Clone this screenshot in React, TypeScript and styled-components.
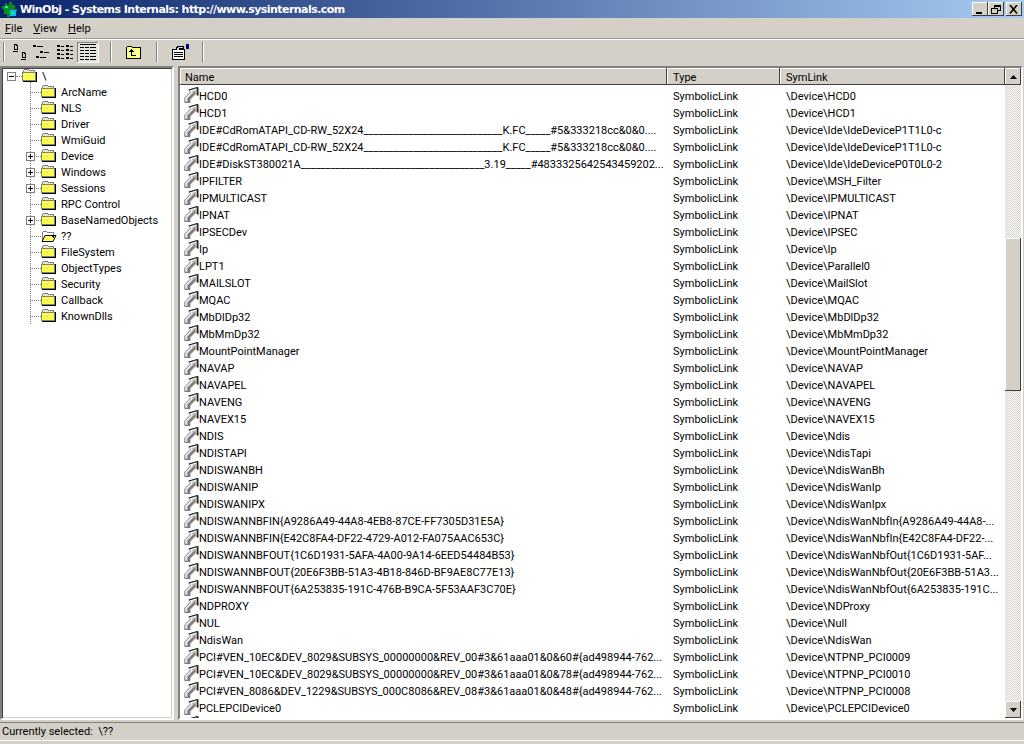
import React from "react";
import styled, { createGlobalStyle } from "styled-components";

const Global = createGlobalStyle`
  html, body { margin: 0; padding: 0; width: 1024px; height: 744px; overflow: hidden; background: #d4d0c8; }
  * { box-sizing: border-box; }
`;
const Win = styled.div`
  width: 1024px; height: 744px; display: flex; flex-direction: column; background: #d4d0c8;
  font-family: Roboto, "Liberation Sans", Arial, sans-serif; font-size: 11px; color: #000; overflow: hidden;
`;
const TitleBar = styled.div`
  height: 18px; flex: none; display: flex; align-items: center; padding: 0 2px 0 2px; gap: 2px;
  background: linear-gradient(90deg, #0a246a 0%, #a6caf0 100%);
  color: #fff; font: bold 11px "DejaVu Sans", sans-serif; letter-spacing: -0.55px;
`;
const TitleText = styled.span` flex: 1; white-space: nowrap; `;
const CapGroup = styled.div` display: flex; `;
const CapBtn = styled.div<{ $gap?: boolean }>`
  width: 16px; height: 14px; margin-left: ${p => (p.$gap ? 2 : 0)}px; background: #d4d0c8;
  box-shadow: inset -1px -1px #404040, inset 1px 1px #fff;
  display: flex; align-items: center; justify-content: center;
`;
const MenuBar = styled.div`
  height: 20px; flex: none; display: flex; align-items: center; gap: 11px; padding: 0 0 0 5px;
  u { text-decoration: underline; }
`;
const Rule = styled.div`
  height: 2px; flex: none; background: #9a9a9a; border-bottom: 1px solid #fff;
`;
const Toolbar = styled.div`
  height: 24px; flex: none; display: flex; align-items: center; padding-left: 3px;
`;
const Sep = styled.div<{ $l: number; $r: number }>`
  width: 2px; height: 20px; margin: 0 ${p => p.$r}px 0 ${p => p.$l}px; border-left: 1px solid #808080; border-right: 1px solid #fff;
`;
const TBtn = styled.div<{ $on?: boolean }>`
  width: 22px; height: 21px; display: flex; align-items: center; justify-content: center;
  ${p => p.$on ? "box-shadow: inset -1px -1px #fff, inset 1px 1px #808080; background: #e4e2dd;" : ""}
`;
const Main = styled.div`
  flex: 1; min-height: 0; display: flex; padding: 2px 1px 2px 0;
`;
const Tree = styled.div`
  width: 174px; flex: none; background: #fff; border: 2px solid; border-color: #808080 #fff #fff #808080;
  box-shadow: inset 1px 1px #404040, inset -1px -1px #d4d0c8; padding: 0 0 0 2px; overflow: hidden; position: relative;
`;
const TreeRow = styled.div<{ $child?: boolean }>`
  height: 16px; display: flex; align-items: center; position: relative; padding-left: ${p => (p.$child ? 37 : 18)}px;
  white-space: nowrap;
`;
const TreeLabel = styled.span` margin-left: 3px; padding: 0 1px; `;
const Exp = styled.span`
  position: absolute; width: 9px; height: 9px; top: 4px; border: 1px solid #808080; background: #fff;
  display: flex; align-items: center; justify-content: center; left: 22px; z-index: 1;
`;
const RootExp = styled(Exp)` left: 3px; `;
const VLine = styled.div`
  position: absolute; left: 28px; top: 14px; height: 242px; border-left: 1px dotted #808080;
`;
const HDot = styled.span<{ $l: number; $w: number }>`
  position: absolute; left: ${p => p.$l}px; top: 8px; width: ${p => p.$w}px; border-top: 1px dotted #808080;
`;
const Splitter = styled.div` width: 4px; flex: none; `;
const ListPane = styled.div`
  flex: 1; min-width: 0; position: relative; background: #fff; border: 2px solid; border-color: #808080 #fff #fff #808080;
  display: grid; grid-template-columns: 1fr 16px; overflow: hidden;
`;
const ListCol = styled.div` min-width: 0; display: flex; flex-direction: column; overflow: hidden; `;
const Cols = "487px 113px 225px";
const Header = styled.div`
  display: grid; grid-template-columns: ${Cols}; height: 17px; flex: none;
`;
const HeadCell = styled.div<{ $pad: number }>`
  background: #d4d0c8; box-shadow: inset -1px -1px #404040, inset 1px 1px #fff; padding: 1px ${p => p.$pad}px 0; line-height: 17px; overflow: hidden;
`;
const Rows = styled.div` flex: 1; overflow: hidden; padding-top: 2px; `;
const Row = styled.div`
  display: grid; grid-template-columns: ${Cols}; height: 17px; align-items: center; white-space: nowrap;
`;
const NameCell = styled.div` display: flex; align-items: flex-start; height: 17px; padding-left: 4px; overflow: hidden; line-height: 19px; `;
const Cell = styled.div` padding-left: 6px; overflow: hidden; height: 17px; line-height: 19px; `;
const Scroll = styled.div`
  display: flex; flex-direction: column;
  background: repeating-conic-gradient(#d4d0c8 0% 25%, #fff 0% 50%) 0 0 / 2px 2px;
`;
const SBtn = styled.div`
  width: 16px; height: 17px; flex: none; background: #d4d0c8; display: flex; align-items: center; justify-content: center;
  box-shadow: inset -1px -1px #404040, inset 1px 1px #fff;
`;
const Track = styled.div` flex: 1; padding-top: 153px; `;
const Thumb = styled.div`
  height: 153px; background: #d4d0c8; box-shadow: inset -1px -1px #404040, inset 1px 1px #fff;
`;
const Status = styled.div`
  height: 22px; flex: none; border-top: 1px solid #808080; padding: 0 0 0 2px; line-height: 18px; position: relative;
  white-space: pre;
  &::after { content: ""; position: absolute; left: 0; right: 0; bottom: 3px; height: 1px; background: #fff; }
`;

const Folder = ({ open }: { open?: boolean }) => (
  <svg width="16" height="14" viewBox="0 0 16 14" shapeRendering="crispEdges" style={{ flex: "none" }}>
    <defs>
      <pattern id="dith" width="2" height="2" patternUnits="userSpaceOnUse">
        <rect width="2" height="2" fill="#ffff00" /><rect width="1" height="1" fill="#fff" opacity=".6" /><rect x="1" y="1" width="1" height="1" fill="#fff" opacity=".6" />
      </pattern>
    </defs>
    {open ? (
      <>
        <path d="M1.5 12V3.5l1-1h3l1 1h6v2" fill="#fff" stroke="#808080" />
        <path d="M4 6.5h11l-3 6H1z" fill="#ffff66" stroke="#000" shapeRendering="auto" />
        <path d="M11 6l2 3" stroke="#000" />
      </>
    ) : (
      <>
        <path d="M1.5 3.5V1.5l1-1h4l1 1h5v2" fill="#e8e6e0" stroke="#808080" />
        <rect x="0.5" y="3.5" width="13" height="8" fill="url(#dith)" stroke="#808080" />
        <path d="M14.5 3v10M1 12.5h14" stroke="#000" />
      </>
    )}
  </svg>
);
const Link = () => (
  <svg width="15" height="16" viewBox="0 0 15 16" style={{ flex: "none" }}>
    <path d="M.8 15.5V11L6.8 4.8 4.8 3 13.8.4V8.4L11.8 6.6 6 12.4V15.5z" fill="#b4b2ac" stroke="#555" strokeWidth=".7" />
    <path d="M2 14.5V11.2L8 5.2 6.8 3.8 12 2.2" fill="none" stroke="#f6f6f6" strokeWidth="1.3" />
    <path d="M4.6 15V11.8L11 5.4" fill="none" stroke="#6e6e6e" strokeWidth="1.3" />
    <path d="M13.8 .4V8.4" fill="none" stroke="#000" strokeWidth="1.1" />
    <path d="M4.8 3L13.8 .4" fill="none" stroke="#111" strokeWidth=".9" />
  </svg>
);
const Ink = (p: { d: string }) => <path d={p.d} stroke="#000" fill="none" />;
const IconLarge = () => (
  <svg width="22" height="16" viewBox="0 0 22 16" shapeRendering="crispEdges">
    <Ink d="M3.5.5h2v1h1v4h-3zM2 7.5h5" />
    <Ink d="M11.5 8.5h2v1h1v4h-3zM10 15.5h5" />
  </svg>
);
const IconSmall = () => (
  <svg width="22" height="16" viewBox="0 0 22 16" shapeRendering="crispEdges">
    <Ink d="M0 1.5h2v1h-2zM4 2.5h6M7 7.5h2v1h-2zM11 8.5h5M3 12.5h2v1h-2zM7 13.5h6" />
  </svg>
);
const IconList = () => (
  <svg width="22" height="16" viewBox="0 0 22 16" shapeRendering="crispEdges">
    <Ink d="M2 1.5h2v1h-2zM6 2.5h3M11 1.5h2v1h-2zM15 2.5h3M2 5.5h2v1h-2zM6 6.5h3M11 5.5h2v1h-2zM15 6.5h3M2 9.5h2v1h-2zM6 10.5h3M11 9.5h2v1h-2zM15 10.5h3M2 13.5h2v1h-2zM6 14.5h3M11 13.5h2v1h-2zM15 14.5h3" />
  </svg>
);
const IconDetail = () => (
  <svg width="22" height="16" viewBox="0 0 22 16" shapeRendering="crispEdges">
    <path d="M3 0h16v1H3zM3 3h4v1H3zM8 3h4v1H8zM13 3h6v1h-6zM3 6h4v1H3zM8 6h4v1H8zM13 6h6v1h-6zM3 9h4v1H3zM8 9h4v1H8zM13 9h6v1h-6zM3 12h4v1H3zM8 12h4v1H8zM13 12h6v1h-6zM3 15h4v1H3zM8 15h4v1H8zM13 15h6v1h-6z" fill="#000" />
  </svg>
);
const IconUp = () => (
  <svg width="22" height="15" viewBox="0 0 22 15" shapeRendering="crispEdges">
    <path d="M3.5 2.5l1-1h4l1 1h8v11h-14z" fill="#ffff88" stroke="#000" />
    <path d="M8 4h1v1h1v1h1v1H9v3h4v1H8V7H6V6h1V5h1z" fill="#000" />
  </svg>
);
const IconProps = () => (
  <svg width="22" height="16" viewBox="0 0 22 16" shapeRendering="crispEdges">
    <path d="M3.5 5.5h12v10h-12z" fill="#fff" stroke="#000" />
    <path d="M5 8h9v1H5zM5 10h9v1H5zM5 12h9v1H5z" fill="#000" />
    <path d="M7.5 5.5v-2h1v-1h6v2h-4v1" fill="#d4d0c8" stroke="#000" />
    <path d="M17 0h3v5h-3z" fill="#000080" />
  </svg>
);

const trees: [string, boolean?][] = [
  ["ArcName"], ["NLS"], ["Driver"], ["WmiGuid"], ["Device", true], ["Windows", true], ["Sessions", true],
  ["RPC Control"], ["BaseNamedObjects", true], ["??"], ["FileSystem"], ["ObjectTypes"], ["Security"], ["Callback"], ["KnownDlls"],
];
const L = "SymbolicLink";
const us = (n: number) => "_".repeat(n);
const cd = `IDE#CdRomATAPI_CD-RW_52X24${us(28)}K.FC${us(5)}#5&333218cc&0&0....`;
const rows: [string, string][] = [
  ["HCD0", "\\Device\\HCD0"], ["HCD1", "\\Device\\HCD1"],
  [cd, "\\Device\\Ide\\IdeDeviceP1T1L0-c"],
  [cd, "\\Device\\Ide\\IdeDeviceP1T1L0-c"],
  [`IDE#DiskST380021A${us(37)}3.19${us(5)}#4833325642543459202...`, "\\Device\\Ide\\IdeDeviceP0T0L0-2"],
  ["IPFILTER", "\\Device\\MSH_Filter"], ["IPMULTICAST", "\\Device\\IPMULTICAST"], ["IPNAT", "\\Device\\IPNAT"],
  ["IPSECDev", "\\Device\\IPSEC"], ["Ip", "\\Device\\Ip"], ["LPT1", "\\Device\\Parallel0"], ["MAILSLOT", "\\Device\\MailSlot"],
  ["MQAC", "\\Device\\MQAC"], ["MbDlDp32", "\\Device\\MbDlDp32"], ["MbMmDp32", "\\Device\\MbMmDp32"],
  ["MountPointManager", "\\Device\\MountPointManager"], ["NAVAP", "\\Device\\NAVAP"], ["NAVAPEL", "\\Device\\NAVAPEL"],
  ["NAVENG", "\\Device\\NAVENG"], ["NAVEX15", "\\Device\\NAVEX15"], ["NDIS", "\\Device\\Ndis"], ["NDISTAPI", "\\Device\\NdisTapi"],
  ["NDISWANBH", "\\Device\\NdisWanBh"], ["NDISWANIP", "\\Device\\NdisWanIp"], ["NDISWANIPX", "\\Device\\NdisWanIpx"],
  ["NDISWANNBFIN{A9286A49-44A8-4EB8-87CE-FF7305D31E5A}", "\\Device\\NdisWanNbfIn{A9286A49-44A8-..."],
  ["NDISWANNBFIN{E42C8FA4-DF22-4729-A012-FA075AAC653C}", "\\Device\\NdisWanNbfIn{E42C8FA4-DF22-..."],
  ["NDISWANNBFOUT{1C6D1931-5AFA-4A00-9A14-6EED54484B53}", "\\Device\\NdisWanNbfOut{1C6D1931-5AF..."],
  ["NDISWANNBFOUT{20E6F3BB-51A3-4B18-846D-BF9AE8C77E13}", "\\Device\\NdisWanNbfOut{20E6F3BB-51A3..."],
  ["NDISWANNBFOUT{6A253835-191C-476B-B9CA-5F53AAF3C70E}", "\\Device\\NdisWanNbfOut{6A253835-191C..."],
  ["NDPROXY", "\\Device\\NDProxy"], ["NUL", "\\Device\\Null"], ["NdisWan", "\\Device\\NdisWan"],
  ["PCI#VEN_10EC&DEV_8029&SUBSYS_00000000&REV_00#3&61aaa01&0&60#{ad498944-762...", "\\Device\\NTPNP_PCI0009"],
  ["PCI#VEN_10EC&DEV_8029&SUBSYS_00000000&REV_00#3&61aaa01&0&78#{ad498944-762...", "\\Device\\NTPNP_PCI0010"],
  ["PCI#VEN_8086&DEV_1229&SUBSYS_000C8086&REV_08#3&61aaa01&0&48#{ad498944-762...", "\\Device\\NTPNP_PCI0008"],
  ["PCLEPCIDevice0", "\\Device\\PCLEPCIDevice0"],
];

export default function App() {
  return (
    <Win>
      <Global />
      <TitleBar>
        <svg width="16" height="16" viewBox="0 0 16 16" shapeRendering="crispEdges" style={{ flex: "none" }}>
          <path d="M3 2h2v2h2V1h3v3h3v4h2v3h-3v3H8v2H5v-3H2V8H0V5h3z" fill="#0c8a2c" />
          <path d="M8 9h6v6H8z" fill="#18b8e8" />
          <path d="M3 5h3v2H3zM9 11h3v2H9z" fill="#00ff66" />
        </svg>
        <TitleText>WinObj - Systems Internals: http://www.sysinternals.com</TitleText>
        <CapGroup>
          <CapBtn><svg width="10" height="9"><path d="M1 7h6v2H1z" fill="#000" /></svg></CapBtn>
          <CapBtn><svg width="10" height="9" shapeRendering="crispEdges"><path d="M3.5.5h6v5h-6zM3 1h6" fill="none" stroke="#000" /><path d="M.5 3.5h6v5h-6z" fill="#d4d0c8" stroke="#000" /><path d="M0 3h7" stroke="#000" /></svg></CapBtn>
          <CapBtn $gap><svg width="10" height="9"><path d="M1 0l7 8.5M8 0L1 8.5" stroke="#000" strokeWidth="1.6" /></svg></CapBtn>
        </CapGroup>
      </TitleBar>
      <MenuBar>
        <span><u>F</u>ile</span><span><u>V</u>iew</span><span><u>H</u>elp</span>
      </MenuBar>
      <Rule />
      <Toolbar>
        <Sep $l={0} $r={6} />
        <TBtn><IconLarge /></TBtn>
        <TBtn><IconSmall /></TBtn>
        <TBtn><IconList /></TBtn>
        <TBtn $on><IconDetail /></TBtn>
        <Sep $l={11} $r={11} />
        <TBtn><IconUp /></TBtn>
        <Sep $l={11} $r={11} />
        <TBtn><IconProps /></TBtn>
        <Sep $l={11} $r={0} />
      </Toolbar>
      <Main>
        <Tree>
          <VLine />
          <TreeRow>
            <RootExp><svg width="7" height="7"><path d="M1 3.5h5" stroke="#000" /></svg></RootExp>
            <HDot $l={12} $w={6} />
            <Folder /><TreeLabel>\</TreeLabel>
          </TreeRow>
          {trees.map(([n, plus]) => (
            <TreeRow $child key={n}>
              <HDot $l={26} $w={11} />
              {plus && <Exp><svg width="7" height="7"><path d="M1 3.5h5M3.5 1v5" stroke="#000" /></svg></Exp>}
              <Folder open={n === "??"} /><TreeLabel>{n}</TreeLabel>
            </TreeRow>
          ))}
        </Tree>
        <Splitter />
        <ListPane>
          <ListCol>
            <Header><HeadCell $pad={5}>Name</HeadCell><HeadCell $pad={6}>Type</HeadCell><HeadCell $pad={6}>SymLink</HeadCell></Header>
            <Rows>
              {rows.map(([n, s], i) => (
                <Row key={i}><NameCell><Link />{n}</NameCell><Cell>{L}</Cell><Cell>{s}</Cell></Row>
              ))}
              <Row><NameCell><Link /></NameCell></Row>
            </Rows>
          </ListCol>
          <Scroll>
            <SBtn><svg width="7" height="4"><path d="M3.5 0L7 4H0z" fill="#000" /></svg></SBtn>
            <Track><Thumb /></Track>
            <SBtn><svg width="7" height="4"><path d="M0 0h7L3.5 4z" fill="#000" /></svg></SBtn>
          </Scroll>
        </ListPane>
      </Main>
      <Status>{"Currently selected:  \\??"}</Status>
    </Win>
  );
}
